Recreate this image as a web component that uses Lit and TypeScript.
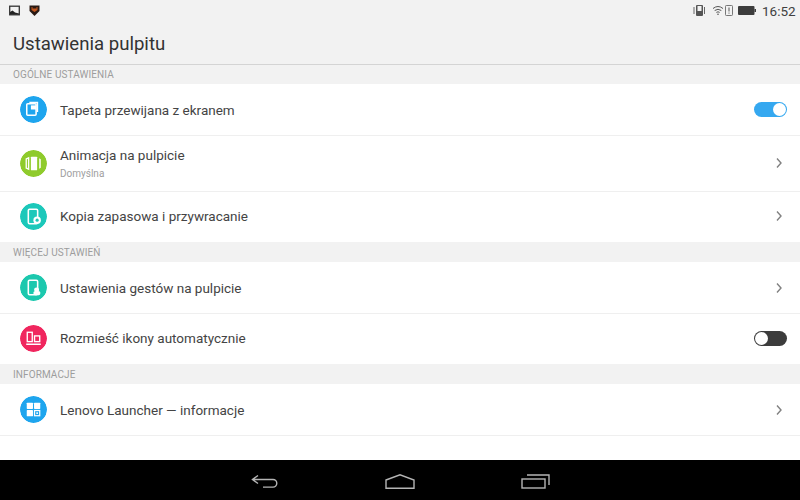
import { LitElement, html, css, svg } from "lit";
import { customElement } from "lit/decorators.js";

const icons: Record<string, unknown> = {
  wallpaper: svg`<rect x="6.500" y="7.500" width="9" height="11" rx="1" fill="none" stroke="#fff" stroke-width="1.5"/><path d="M9 5.500h8.500v10h-1.500v-8.500H9z" fill="#fff"/><rect x="10.500" y="9" width="5" height="4" fill="#fff"/>`,
  anim: svg`<rect x="10.500" y="6.500" width="6" height="13" rx=".6" fill="#fff"/><path d="M8.300 7.500v11l-2.300-1v-9z" fill="none" stroke="#fff" stroke-width="1.300"/><path d="M18.500 8v10l1.500-.8v-8.400z" fill="#fff"/>`,
  backup: svg`<rect x="8" y="6" width="9" height="14" rx="1.200" fill="none" stroke="#fff" stroke-width="1.500"/><circle cx="16.500" cy="16.500" r="3.600" fill="#fff"/><circle cx="16.500" cy="16.500" r="1.500" fill="#1cc8ba"/>`,
  gesture: svg`<rect x="8" y="6" width="9" height="14" rx="1.200" fill="none" stroke="#fff" stroke-width="1.500"/><circle cx="16" cy="15.500" r="2.400" fill="#fff"/><rect x="13" y="16.500" width="6.500" height="4" rx="1.400" fill="#fff"/>`,
  arrange: svg`<rect x="7" y="7" width="4.800" height="9" fill="none" stroke="#fff" stroke-width="1.300"/><rect x="14" y="10.500" width="5" height="5.500" fill="none" stroke="#fff" stroke-width="1.300"/><path d="M6 18.600h14" stroke="#fff" stroke-width="1.400"/>`,
  info: svg`<rect x="6.500" y="6.500" width="6" height="6" rx=".6" fill="#fff"/><rect x="13.500" y="6.500" width="6" height="6" rx=".6" fill="#fff"/><rect x="6.500" y="13.500" width="6" height="6" rx=".6" fill="#fff"/><rect x="14" y="14" width="5" height="5" fill="none" stroke="#fff" stroke-width="1.200"/><rect x="15.700" y="15.700" width="1.600" height="1.600" fill="#fff"/>`,
};

@customElement("app-root")
export class AppRoot extends LitElement {
  static styles = css`
    :host { display: flex; flex-direction: column; width: 800px; height: 500px; background: #fff; font-family: Roboto, "Noto Sans", sans-serif; color: #3c3c3c; overflow: hidden; }
    .head { background: #f2f2f2; height: 64px; border-bottom: 1px solid #d4d4d4; display: flex; flex-direction: column; flex: none; }
    .status { height: 21px; display: flex; align-items: center; padding: 0 6px 0 9px; flex: none; }
    .shield { margin-left: 8px; }
    .spacer { flex: 1; }
    .wifi { margin-left: 7px; }
    .sim { margin-left: 1px; }
    .battery { margin-left: 5px; }
    .time { font-size: 13.500px; color: #404040; margin-left: 6px; width: 32px; }
    .title { font-size: 18.600px; color: #333; padding: 11px 0 0 13px; line-height: 24px; }
    .section { height: 20px; flex: none; background: #f2f2f2; font-size: 10px; line-height: 21px; color: #9d9d9d; padding-left: 13px; letter-spacing: 0.1px; }
    .section.first { height: 19px; line-height: 19px; }
    .row { flex: none; display: flex; align-items: center; padding: 0 13px 0 20px; border-bottom: 1px solid #efefef; gap: 13px; box-sizing: border-box; }
    .row.sub-row { padding-bottom: 1px; }
    .row.last { border-bottom: none; padding-bottom: 2px; }
    .badge { width: 27px; height: 27px; border-radius: 50%; flex: none; display: block; }
    .body { flex: 1; display: flex; flex-direction: column; }
    .label { font-size: 13.500px; color: #444; line-height: 18px; }
    .sub { font-size: 10px; color: #a0a0a0; line-height: 12px; margin-top: 4px; }
    .chev { width: 8px; height: 12px; flex: none; margin-right: 4px; }
    .toggle { width: 33px; height: 15px; border-radius: 8px; position: relative; flex: none; }
    .toggle.on { background: #35a8f0; }
    .toggle.off { background: #3c3c3c; }
    .knob { position: absolute; top: 1px; width: 13px; height: 13px; border-radius: 50%; background: #fff; }
    .on .knob { right: 1px; }
    .off .knob { left: 1px; }
    .fill { flex: 1; }
    .nav { height: 38px; flex: none; background: #000; display: flex; align-items: center; justify-content: center; gap: 106px; padding-top: 2px; }
    .nav svg { display: block; }
  `;

  private row(icon: string, color: string, h: number, label: string, opts: { sub?: string; toggle?: string; last?: boolean } = {}) {
    return html`<div class="row ${opts.last ? "last" : ""} ${opts.sub ? "sub-row" : ""}" style="height:${h}px">
      <svg class="badge" viewBox="0 0 26 26"><circle cx="13" cy="13" r="13" fill="${color}"/>${icons[icon]}</svg>
      <div class="body">
        <div class="label">${label}</div>
        ${opts.sub ? html`<div class="sub">${opts.sub}</div>` : ""}
      </div>
      ${opts.toggle
        ? html`<div class="toggle ${opts.toggle}"><div class="knob"></div></div>`
        : html`<svg class="chev" viewBox="0 0 8 12"><path d="M2 1.500L6 6 2 10.500" fill="none" stroke="#808080" stroke-width="1.400"/></svg>`}
    </div>`;
  }

  render() {
    return html`
      <div class="head">
        <div class="status">
          <svg width="11" height="11" viewBox="0 0 11 11"><rect x=".7" y="1.200" width="9.600" height="8.600" fill="#f2f2f2" stroke="#333" stroke-width="1.300"/><path d="M1 9.500V7l2.500-1.500L6 7.500l4 1v1z" fill="#222"/></svg>
          <svg class="shield" width="13" height="13" viewBox="0 0 13 13"><path d="M1.500 1.500h10v5.500L6.500 12 1.500 7z" fill="#2a1a14"/><path d="M3.500 3h6v3L6.500 8 3.500 6z" fill="#c0561f"/><path d="M4.500 3h4v1.500h-4z" fill="#2a1a14"/></svg>
          <div class="spacer"></div>
          <svg width="12" height="13" viewBox="0 0 12 13"><rect x="3" y="1" width="7" height="11" rx="1" fill="#555"/><rect x="4.500" y="2" width="4" height="5" fill="#f2f2f2"/><path d="M1 3v7M11.500 3v7" stroke="#666"/></svg>
          <svg class="wifi" width="12" height="11" viewBox="0 0 12 11" fill="none" stroke="#555" stroke-width="1"><path d="M1 3.500Q6-.5 11 3.500M2.700 5.500Q6 3 9.300 5.500M4.400 7.400Q6 6.200 7.600 7.400"/><circle cx="6" cy="9.200" r=".8" fill="#555" stroke="none"/></svg>
          <svg class="sim" width="8" height="11" viewBox="0 0 8 11"><rect x=".5" y=".5" width="7" height="10" rx=".8" fill="none" stroke="#777"/><path d="M4 2.500v4M4 7.600v1" stroke="#555"/></svg>
          <svg class="battery" width="18" height="9" viewBox="0 0 18 9"><rect width="16.500" height="9" rx="1" fill="#3c3c3c"/><rect x="16.500" y="3" width="1.500" height="3" fill="#3c3c3c"/></svg>
          <div class="time">16:52</div>
        </div>
        <div class="title">Ustawienia pulpitu</div>
      </div>
      <div class="section first">OGÓLNE USTAWIENIA</div>
      ${this.row("wallpaper", "#1ea5ee", 52, "Tapeta przewijana z ekranem", { toggle: "on" })}
      ${this.row("anim", "#8fcb2c", 56, "Animacja na pulpicie", { sub: "Domyślna" })}
      ${this.row("backup", "#1cc8ba", 50, "Kopia zapasowa i przywracanie", { last: true })}
      <div class="section">WIĘCEJ USTAWIEŃ</div>
      ${this.row("gesture", "#1cc8ae", 52, "Ustawienia gestów na pulpicie")}
      ${this.row("arrange", "#f0265e", 50, "Rozmieść ikony automatycznie", { toggle: "off", last: true })}
      <div class="section">INFORMACJE</div>
      ${this.row("info", "#1ea5ee", 52, "Lenovo Launcher — informacje")}
      <div class="fill"></div>
      <div class="nav">
        <svg width="28" height="15" viewBox="0 0 28 15" fill="none" stroke="#b5b5b5" stroke-width="1.400"><path d="M7 1.500L1.500 5.500 7 9.500M1.500 5.500H22a3.800 3.800 0 0 1 0 7.600H12"/></svg>
        <svg width="30" height="15" viewBox="0 0 30 15" fill="none" stroke="#b5b5b5" stroke-width="1.400"><path d="M1 6L15 .8 29 6V14.300H1z"/></svg>
        <svg width="29" height="15" viewBox="0 0 29 15" fill="none" stroke="#b5b5b5" stroke-width="1.400"><rect x="1" y="5" width="23" height="9"/><path d="M6 1h22v10"/></svg>
      </div>
    `;
  }
}
